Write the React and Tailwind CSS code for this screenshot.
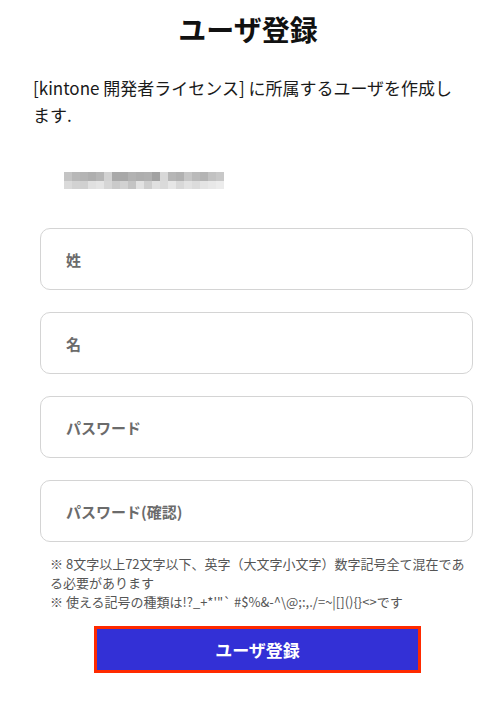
import React, { useState } from "react";

const topRow = [
  "bg-[#c4c4c4]", "bg-[#b8b8b8]", "bg-[#b4b4b4]", "bg-[#afafaf]", "bg-[#b6b6b6]",
  "bg-[#d2d2d2]", "bg-[#a9a9a9]", "bg-[#a8a8a8]", "bg-[#b2b2b2]", "bg-[#aeaeae]",
  "bg-[#b0b0b0]", "bg-[#a2a2a2]", "bg-[#d8d8d8]", "bg-[#b6b6b6]", "bg-[#b1b1b1]",
  "bg-[#c6c6c6]", "bg-[#bababa]", "bg-[#b4b4b4]", "bg-[#c2c2c2]", "bg-[#c8c8c8]",
];

const bottomRow = [
  "bg-[#dadada]", "bg-[#d2d2d2]", "bg-[#d0d0d0]", "bg-[#e0e0e0]", "bg-[#e4e4e4]",
  "bg-[#d6d6d6]", "bg-[#cacaca]", "bg-[#d2d2d2]", "bg-[#c4c4c4]", "bg-[#e2e2e2]",
  "bg-[#cecece]", "bg-[#e0e0e0]", "bg-[#dadada]", "bg-[#e6e6e6]", "bg-[#d8d8d8]",
  "bg-[#e2e2e2]", "bg-[#dcdcdc]", "bg-[#e4e4e4]", "bg-[#e8e8e8]", "bg-[#ececec]",
];

const fields = [
  { name: "lastName", type: "text", placeholder: "姓" },
  { name: "firstName", type: "text", placeholder: "名" },
  { name: "password", type: "password", placeholder: "パスワード" },
  { name: "passwordConfirm", type: "password", placeholder: "パスワード(確認)" },
];

const symbolNote = "※ 使える記号の種類は!?_+*'\"` #$%&-^\\@;:,./=~|[](){}<>です";

const App = () => {
  const [formData, setFormData] = useState({
    lastName: "",
    firstName: "",
    password: "",
    passwordConfirm: "",
  });

  const handleInputChange = (e) => {
    const { name, value } = e.target;
    setFormData({ ...formData, [name]: value });
  };

  return (
    <div className="w-[492px] min-h-[712px] bg-white text-[#1a1a1a] font-['Noto_Sans_CJK_JP','Noto_Sans',sans-serif]">
      <h1 className="pt-[9px] text-center text-[28px] leading-[40px] font-bold text-[#111] pl-[4px]">
        ユーザ登録
      </h1>

      <p className="mt-[25px] ml-[33px] w-[436px] text-[17px] leading-[27px] text-[#1a1a1a]">
        [kintone 開発者ライセンス] に所属するユーザを作成します.
      </p>

      {/* blurred account email */}
      <div className="mt-[44px] ml-[64px] flex flex-col">
        <div className="flex">
          {topRow.map((c, i) => (
            <div key={i} className={`w-[8px] h-[9px] ${c}`} />
          ))}
        </div>
        <div className="flex">
          {bottomRow.map((c, i) => (
            <div key={i} className={`w-[8px] h-[8px] ${c}`} />
          ))}
        </div>
      </div>

      <form className="mt-[39px] ml-[40px] w-[433px] flex flex-col">
        <div className="flex flex-col gap-[22px]">
          {fields.map((f) => (
            <input
              key={f.name}
              type={f.type}
              name={f.name}
              value={formData[f.name]}
              onChange={handleInputChange}
              placeholder={f.placeholder}
              className="h-[62px] w-full rounded-[10px] border border-[#d4d4d4] bg-white px-[25px] text-[15px] font-bold text-[#333] placeholder-[#6b6b6b] focus:outline-none"
            />
          ))}
        </div>

        <div className="mt-[12px] ml-[10px] w-[418px] text-[13px] leading-[19px] text-[#555]">
          <p>※ 8文字以上72文字以下、英字（大文字小文字）数字記号全て混在である必要があります</p>
          <p>{symbolNote}</p>
        </div>

        <button
          type="submit"
          className="mt-[15px] ml-[54px] w-[327px] h-[47px] border-[3px] border-[#ff2a00] bg-[#3330d6] text-white text-[17px] font-bold"
        >
          ユーザ登録
        </button>
      </form>
    </div>
  );
};

export default App;
